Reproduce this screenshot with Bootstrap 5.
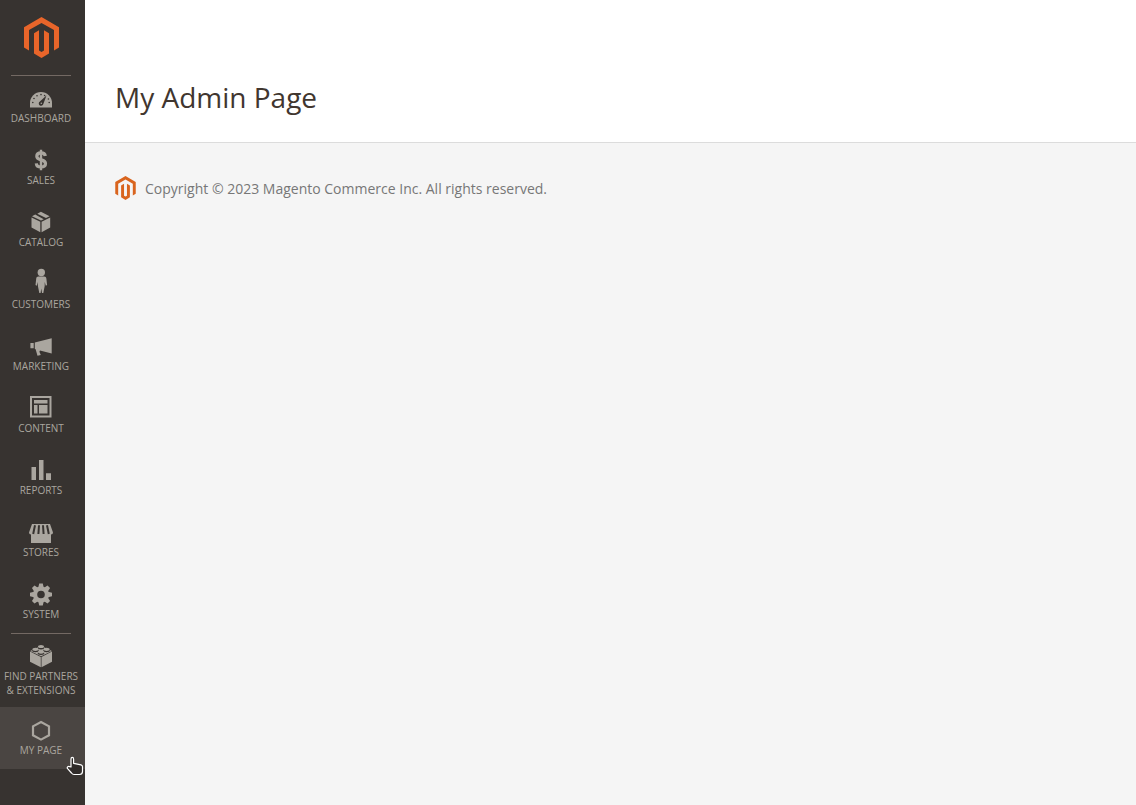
<!DOCTYPE html>
<html lang="en">
<head>
<meta charset="utf-8">
<meta name="viewport" content="width=device-width, initial-scale=1">
<title>My Admin Page</title>
<link href="https://cdn.jsdelivr.net/npm/bootstrap@5.3.0/dist/css/bootstrap.min.css" rel="stylesheet">
<style>
body { font-family: "Open Sans", sans-serif; font-size: 14px; background: #f5f5f5; color: #41362f; }
.admin-menu { width: 85px; background: #373330; }
.menu-logo { height: 75px; padding: 17px 2px 0 0; }
.menu-item { position: relative; }
.menu-link { min-height: 62px; padding: 6px 3px 10px 0; color: #aaa69f; font-size: 10px; line-height: 14px; text-transform: uppercase; }
.menu-link:hover { color: #f7f3eb; }
.menu-link svg { width: 30px; height: 30px; fill: currentColor; }
.menu-rule::before { content: ""; position: absolute; top: 0; left: 11px; width: 60px; border-top: 1px solid #736963; }
.menu-item.current { background: #4a4542; }
.hand { position: absolute; right: 1px; bottom: -7px; }
.page-top { padding: 77px 30px 24px; border-bottom: 1px solid #dcdcdc; }
.page-top h1 { font-size: 28px; line-height: 41px; color: #41362f; }
.page-foot { padding: 33px 30px; gap: 9px; color: #777; }
</style>
</head>
<body>
<svg class="d-none" aria-hidden="true">
  <symbol id="magento" viewBox="0 0 35 41">
    <path d="M17.500 0L0 10.200V30.500L5 33.400V13.100L17.500 5.900L30 13.100V33.400L35 30.500V10.200Z"/>
    <path d="M15 13.300L10 16.200V36.500L17.500 41L25 36.500V16.200L20 13.300V33.600L17.500 35L15 33.600Z"/>
  </symbol>
</svg>
<div class="d-flex min-vh-100">
  <nav class="admin-menu flex-shrink-0" aria-label="Admin menu">
    <a href="#" class="menu-logo d-flex justify-content-center align-items-start" aria-label="Magento Admin"><svg width="35" height="41" fill="#e8652a"><use href="#magento"/></svg></a>
    <ul class="list-unstyled m-0">
      <li class="menu-item menu-rule"><a href="#" class="menu-link d-flex flex-column align-items-center text-center text-decoration-none">
        <svg viewBox="0 0 30 30"><path d="M4 26.500V22a11 11 0 0 1 22 0v4.500z"/><g fill="#373330"><circle cx="6.800" cy="21.500" r=".8"/><circle cx="8" cy="17.500" r=".8"/><circle cx="11" cy="14.700" r=".8"/><circle cx="15" cy="13.600" r=".8"/><circle cx="18.600" cy="14.500" r=".8"/><circle cx="22.400" cy="18" r=".8"/><circle cx="23.200" cy="21.500" r=".8"/><path d="M20.500 14.500L17.300 23a2.300 2.300 0 1 1-3.700-2.300z"/></g><circle cx="15.300" cy="22.300" r=".8"/></svg>
        <span>Dashboard</span></a></li>
      <li class="menu-item"><a href="#" class="menu-link d-flex flex-column align-items-center text-center text-decoration-none">
        <svg viewBox="0 0 30 30"><path d="M19.300 13C19 10.900 17.600 9.900 15 9.900c-2.700 0-4.200 1.200-4.200 3.300 0 5 8.700 2.300 8.700 7.300 0 2.200-1.700 3.500-4.500 3.500-2.700 0-4.500-1.300-4.700-3.700" fill="none" stroke="currentColor" stroke-width="3.200"/><path d="M13.800 6.800h2.400v20.400h-2.400z"/></svg>
        <span>Sales</span></a></li>
      <li class="menu-item"><a href="#" class="menu-link d-flex flex-column align-items-center text-center text-decoration-none">
        <svg viewBox="0 0 30 30"><path d="M5.500 12.500L14.300 16.800V27.200L5.500 22.500zM15.600 16.800L24.200 12.500V22.500L15.600 27.200zM6 11.300L9.200 9.600L17.700 14.200L15 15.600zM11.300 8.700L14.900 6.800L23.600 11.300L20 13.100z"/></svg>
        <span>Catalog</span></a></li>
      <li class="menu-item"><a href="#" class="menu-link d-flex flex-column align-items-center text-center text-decoration-none">
        <svg viewBox="0 0 30 30"><circle cx="15.300" cy="5.500" r="3.700"/><path d="M12.500 9.500h5.600c1.500 0 2.100.8 2.300 2.200l.7 6.300-1.300.7-1.100-3.700v4l-1.400 7h-1.300l-.7-4.500-.7 4.500h-1.300l-1.400-7v-4l-1.100 3.700-1.300-.7.700-6.300c.2-1.400.8-2.200 2.300-2.200z"/></svg>
        <span>Customers</span></a></li>
      <li class="menu-item"><a href="#" class="menu-link d-flex flex-column align-items-center text-center text-decoration-none">
        <svg viewBox="0 0 30 30"><path d="M4.400 14h3.300v5.300H4.400zM8.800 13.500L25.700 9.200V24.500L14 21.500L13.400 22.800L14.800 26L11.500 26.800L9.600 20.200L8.800 19.800z"/></svg>
        <span>Marketing</span></a></li>
      <li class="menu-item"><a href="#" class="menu-link d-flex flex-column align-items-center text-center text-decoration-none">
        <svg viewBox="0 0 30 30"><path fill-rule="evenodd" d="M4 5H25.500V26.500H4zM6 7V24.500H23.500V7z"/><path d="M8 9h13.500v3.500H8zM8 14h3.500v8.500H8zM13 14h8.500v8.500H13z"/></svg>
        <span>Content</span></a></li>
      <li class="menu-item"><a href="#" class="menu-link d-flex flex-column align-items-center text-center text-decoration-none">
        <svg viewBox="0 0 30 30"><path d="M5.500 14H10V27H5.500zM13 7H17.500V27H13zM20 20.300H25V27H20z"/></svg>
        <span>Reports</span></a></li>
      <li class="menu-item"><a href="#" class="menu-link d-flex flex-column align-items-center text-center text-decoration-none">
        <svg viewBox="0 0 30 30"><path d="M6 9H24L27 17.500Q27 19.500 25 19.500V28H5V19.500Q3 19.500 3 17.500z"/><path d="M9 10.300L7.200 19M13 10.300L12.400 19M17 10.300L17.600 19M21 10.300L22.800 19" fill="none" stroke="#373330" stroke-width="2"/></svg>
        <span>Stores</span></a></li>
      <li class="menu-item"><a href="#" class="menu-link d-flex flex-column align-items-center text-center text-decoration-none">
        <svg viewBox="0 0 30 30"><g transform="translate(15 17.500)"><path fill-rule="evenodd" d="M0-8a8 8 0 1 0 0 16a8 8 0 1 0 0-16zM0-3.800a3.800 3.800 0 1 1 0 7.600a3.800 3.800 0 1 1 0-7.600z"/><path id="tooth" d="M-2.700-7L-1.800-11H1.800L2.700-7zM-2.700 7L-1.800 11H1.800L2.700 7z"/><use href="#tooth" transform="rotate(45)"/><use href="#tooth" transform="rotate(90)"/><use href="#tooth" transform="rotate(135)"/></g></svg>
        <span>System</span></a></li>
      <li class="menu-item menu-rule"><a href="#" class="menu-link d-flex flex-column align-items-center text-center text-decoration-none">
        <svg viewBox="0 0 30 30"><path d="M4 12.500L14.800 17.900V28.200L4 22.800zM15.500 17.900L26 12.500V22.800L15.500 28.200z"/><path d="M4.200 11.900L15 6.800L25.800 11.900L15.100 17.200z"/><g fill="#373330"><ellipse cx="15" cy="8.700" rx="3.300" ry="1.700"/><ellipse cx="9.400" cy="11.500" rx="3.300" ry="1.700"/><ellipse cx="20.600" cy="11.500" rx="3.300" ry="1.700"/><ellipse cx="15" cy="14.300" rx="3.300" ry="1.700"/></g><ellipse cx="15" cy="7.500" rx="3" ry="1.600"/><ellipse cx="9.400" cy="10.300" rx="3" ry="1.600"/><ellipse cx="20.600" cy="10.300" rx="3" ry="1.600"/><ellipse cx="15" cy="13.100" rx="3" ry="1.600"/></svg>
        <span>Find Partners<br>&amp; Extensions</span></a></li>
      <li class="menu-item current"><a href="#" class="menu-link d-flex flex-column align-items-center text-center text-decoration-none" aria-current="page">
        <svg viewBox="0 0 30 30"><path d="M15 9L23 13.300V22.300L15 26.600L7 22.300V13.300z" fill="none" stroke="currentColor" stroke-width="2.200"/></svg>
        <span>My Page</span></a>
        <svg class="hand" width="18" height="20" viewBox="0 0 18 20" aria-hidden="true"><path d="M5 11V3.200C5 .8 7.600 .8 7.600 3.200V7.300L15 8.800Q16.500 9.200 16.500 10.800V15.500C16.500 17.500 15.500 18.500 13.500 18.500H8C6.800 18.500 6.200 18 5.500 17L1.600 12.700C.5 11 2.500 9.800 3.600 10.700z" fill="#2f2b29" stroke="#fff" stroke-width="1.200" stroke-linejoin="round"/></svg>
      </li>
    </ul>
  </nav>
  <div class="flex-grow-1">
    <header class="page-top bg-white"><h1 class="m-0 fw-normal">My Admin Page</h1></header>
    <footer class="page-foot d-flex align-items-center"><svg width="21" height="24" fill="#d9641e" aria-hidden="true"><use href="#magento"/></svg><span>Copyright © 2023 Magento Commerce Inc. All rights reserved.</span></footer>
  </div>
</div>
<script src="https://cdn.jsdelivr.net/npm/bootstrap@5.3.0/dist/js/bootstrap.bundle.min.js"></script>
</body>
</html>
